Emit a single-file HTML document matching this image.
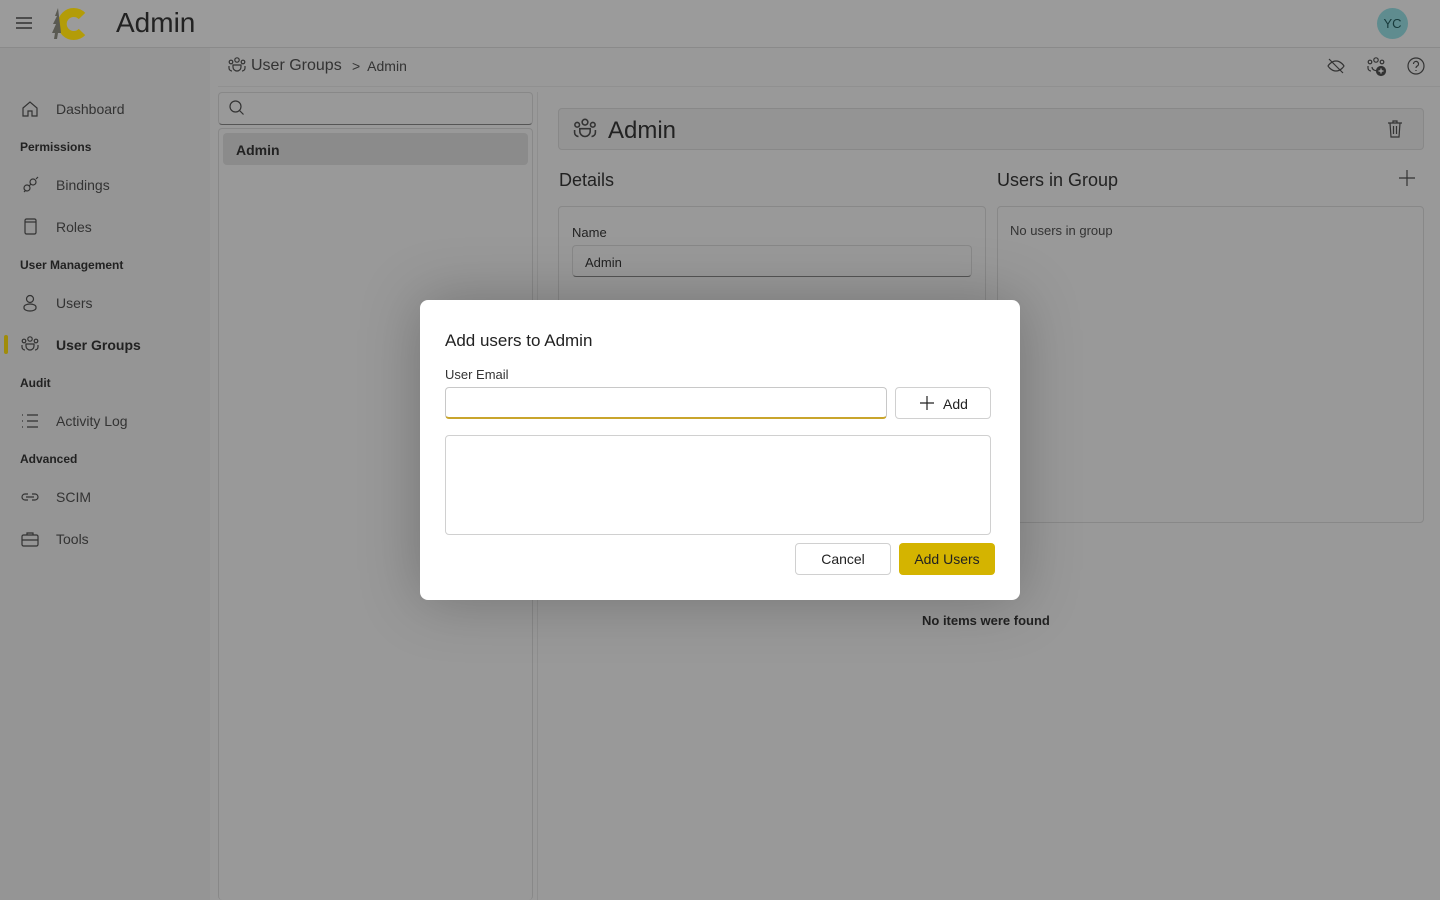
<!DOCTYPE html>
<html><head><meta charset="utf-8"><style>
*{box-sizing:border-box;margin:0;padding:0}
html,body{width:1440px;height:900px;overflow:hidden}
body{background:#999;font-family:"Liberation Sans",sans-serif;color:#222;position:relative}
.hdr{position:absolute;left:0;top:0;width:1440px;height:48px;background:#9b9b9b;border-bottom:1px solid #8a8a8a}
.side{position:absolute;left:0;top:48px;width:210px;height:852px;background:#959595}
.abs{position:absolute}
.nav{position:absolute;left:20px;font-size:14px;color:#333;display:flex;align-items:center}
.nav svg{width:20px;height:20px;margin-right:16px}
.sec{position:absolute;left:20px;font-size:12px;font-weight:bold;color:#222}
.card{position:absolute;border:1px solid #888;border-radius:4px}
svg{fill:none;stroke:#333;stroke-width:1.2}
</style></head><body>
<div class="hdr">
 <svg class="abs" style="left:15px;top:15px" width="18" height="16" viewBox="0 0 18 16"><path d="M1 3h16M1 8h16M1 13h16" stroke-width="1.5"/></svg>
 <svg class="abs" style="left:49px;top:5px" width="46" height="38" viewBox="0 0 46 38"><path d="M33 11A11.5 11.5 0 1 0 33 27" stroke="#b39c08" stroke-width="9"/><path d="M9 3l-3 8h2l-4 8h3l-4 9h3l-1 6h3l1-6h3z" fill="#5a5a52" stroke="none"/></svg>
 <div class="abs" style="left:116px;top:7px;font-size:28px;color:#222">Admin</div>
 <div class="abs" style="left:1377px;top:8px;width:31px;height:31px;border-radius:50%;background:#5f8c8f;color:#173a3b;font-size:13px;text-align:center;line-height:31px">YC</div>
</div>
<div class="side">
 <div class="nav" style="top:51px"><svg viewBox="0 0 20 20"><path d="M3 9l7-6 7 6v8h-5v-5H8v5H3z"/></svg>Dashboard</div>
 <div class="sec" style="top:92px">Permissions</div>
 <div class="nav" style="top:127px"><svg viewBox="0 0 20 20"><circle cx="7" cy="13" r="3"/><circle cx="13" cy="7" r="3"/><path d="M4 17l2-2M16 4l2-2M9 11l2-2"/></svg>Bindings</div>
 <div class="nav" style="top:169px"><svg viewBox="0 0 20 20"><rect x="5" y="2" width="11" height="15" rx="1.5"/><path d="M5 5h11"/></svg>Roles</div>
 <div class="sec" style="top:210px">User Management</div>
 <div class="nav" style="top:245px"><svg viewBox="0 0 20 20"><circle cx="10" cy="6" r="3.5"/><path d="M4 14a6 3 0 0 1 12 0v1a6 3 0 0 1-12 0z"/></svg>Users</div>
 <div class="abs" style="left:4px;top:287px;width:4px;height:19px;background:#a08c0a;border-radius:2px"></div>
 <div class="nav" style="top:287px;font-weight:bold;color:#222"><svg viewBox="0 0 20 20"><circle cx="10" cy="4" r="2.2"/><circle cx="4" cy="6" r="1.8"/><circle cx="16" cy="6" r="1.8"/><path d="M6 11a4 4 0 0 0 8 0v-2H6zM2 10v2a3 3 0 0 0 3 3M18 10v2a3 3 0 0 1-3 3"/></svg>User Groups</div>
 <div class="sec" style="top:328px">Audit</div>
 <div class="nav" style="top:363px"><svg viewBox="0 0 20 20"><path d="M7 4h11M7 10h11M7 16h11M2 4h1M2 10h1M2 16h1"/></svg>Activity Log</div>
 <div class="sec" style="top:404px">Advanced</div>
 <div class="nav" style="top:439px"><svg viewBox="0 0 20 20"><path d="M8 7H5a3 3 0 0 0 0 6h3M12 7h3a3 3 0 0 1 0 6h-3M6 10h8"/></svg>SCIM</div>
 <div class="nav" style="top:481px"><svg viewBox="0 0 20 20"><rect x="2" y="6" width="16" height="11" rx="1.5"/><path d="M7 6V4h6v2M2 11h16"/></svg>Tools</div>
</div>
<svg class="abs" style="left:227px;top:56px" width="20" height="20" viewBox="0 0 20 20"><circle cx="10" cy="4" r="2.2"/><circle cx="4" cy="6" r="1.8"/><circle cx="16" cy="6" r="1.8"/><path d="M6 11a4 4 0 0 0 8 0v-2H6zM2 10v2a3 3 0 0 0 3 3M18 10v2a3 3 0 0 1-3 3"/></svg>
<div class="abs" style="left:251px;top:57px;font-size:16px;color:#333">User Groups</div>
<div class="abs" style="left:352px;top:58px;font-size:14px;color:#333">&gt;&nbsp; Admin</div>
<svg class="abs" style="left:1326px;top:56px" width="20" height="20" viewBox="0 0 20 20"><path d="M2 10s3-5 8-5 8 5 8 5-3 5-8 5-8-5-8-5zM3 3l14 14"/></svg>
<svg class="abs" style="left:1366px;top:56px" width="22" height="22" viewBox="0 0 22 22"><circle cx="10" cy="4" r="2.2"/><circle cx="4" cy="6" r="1.8"/><circle cx="16" cy="6" r="1.8"/><path d="M6 11a4 4 0 0 0 6 3M2 10v2a3 3 0 0 0 3 3"/><circle cx="15" cy="15" r="4.5" fill="#333"/><path d="M15 12.5v5M12.5 15h5" stroke="#aaa"/></svg>
<svg class="abs" style="left:1406px;top:56px" width="20" height="20" viewBox="0 0 20 20"><circle cx="10" cy="10" r="8"/><path d="M7.5 8a2.5 2.5 0 1 1 3.5 2.2c-.7.4-1 .8-1 1.8M10 14v1"/></svg>
<div class="abs" style="left:218px;top:86px;width:1222px;height:1px;background:#909090"></div>
<div class="card" style="left:218px;top:92px;width:315px;height:33px;border-bottom:1.5px solid #555"></div>
<svg class="abs" style="left:228px;top:99px" width="18" height="18" viewBox="0 0 18 18"><circle cx="7.5" cy="7.5" r="5.5"/><path d="M11.5 11.5l4 4"/></svg>
<div class="card" style="left:218px;top:128px;width:315px;height:772px;border-bottom:none"></div>
<div class="abs" style="left:223px;top:133px;width:305px;height:32px;background:#8b8b8b;border-radius:4px;font-size:14px;font-weight:bold;padding:9px 13px">Admin</div>
<div class="abs" style="left:537px;top:92px;width:1px;height:808px;background:#8e8e8e"></div>
<div class="card" style="left:558px;top:108px;width:866px;height:42px;background:#949494"></div>
<svg class="abs" style="left:572px;top:117px" width="26" height="26" viewBox="0 0 20 20"><circle cx="10" cy="4" r="2.2"/><circle cx="4" cy="6" r="1.8"/><circle cx="16" cy="6" r="1.8"/><path d="M6 11a4 4 0 0 0 8 0v-2H6zM2 10v2a3 3 0 0 0 3 3M18 10v2a3 3 0 0 1-3 3"/></svg>
<div class="abs" style="left:608px;top:117px;font-size:24px">Admin</div>
<svg class="abs" style="left:1385px;top:119px" width="20" height="20" viewBox="0 0 20 20"><path d="M3 4h14M8 4V2h4v2M5 4l1 14h8l1-14M8.5 7v8M11.5 7v8"/></svg>
<div class="abs" style="left:559px;top:170px;font-size:18px;color:#222">Details</div>
<div class="abs" style="left:997px;top:170px;font-size:18px;color:#222">Users in Group</div>
<svg class="abs" style="left:1398px;top:169px" width="18" height="18" viewBox="0 0 18 18"><path d="M9 1v16M1 9h16"/></svg>
<div class="card" style="left:558px;top:206px;width:428px;height:100px"></div>
<div class="abs" style="left:572px;top:225px;font-size:13px">Name</div>
<div class="card" style="left:572px;top:245px;width:400px;height:32px;border-bottom:1.5px solid #555;font-size:13px;padding:9px 12px">Admin</div>
<div class="card" style="left:997px;top:206px;width:427px;height:317px"></div>
<div class="abs" style="left:1010px;top:223px;font-size:13px;color:#333">No users in group</div>
<div class="abs" style="left:922px;top:613px;font-size:13px;font-weight:bold">No items were found</div>
<div class="abs" style="left:420px;top:300px;width:600px;height:300px;background:#fff;border-radius:8px;box-shadow:0 0 60px rgba(0,0,0,.25)">
 <div class="abs" style="left:25px;top:31px;font-size:17px;color:#222">Add users to Admin</div>
 <div class="abs" style="left:25px;top:67px;font-size:13px;color:#333">User Email</div>
 <div class="abs" style="left:25px;top:87px;width:442px;height:32px;border:1px solid #c8c8c8;border-bottom:2px solid #c9a52c;border-radius:4px"></div>
 <div class="abs" style="left:475px;top:87px;width:96px;height:32px;border:1px solid #d0d0d0;border-radius:4px;font-size:14px;padding:8px 0 0 47px">Add</div>
 <svg class="abs" style="left:499px;top:95px" width="16" height="16" viewBox="0 0 16 16"><path d="M8 1v14M1 8h14" stroke="#222"/></svg>
 <div class="abs" style="left:25px;top:135px;width:546px;height:100px;border:1px solid #d0d0d0;border-radius:4px"></div>
 <div class="abs" style="left:375px;top:243px;width:96px;height:32px;border:1px solid #d0d0d0;border-radius:4px;font-size:14px;text-align:center;line-height:30px">Cancel</div>
 <div class="abs" style="left:479px;top:243px;width:96px;height:32px;background:#d4b400;border-radius:4px;font-size:14px;text-align:center;line-height:32px;color:#222">Add Users</div>
</div>
</body></html>
